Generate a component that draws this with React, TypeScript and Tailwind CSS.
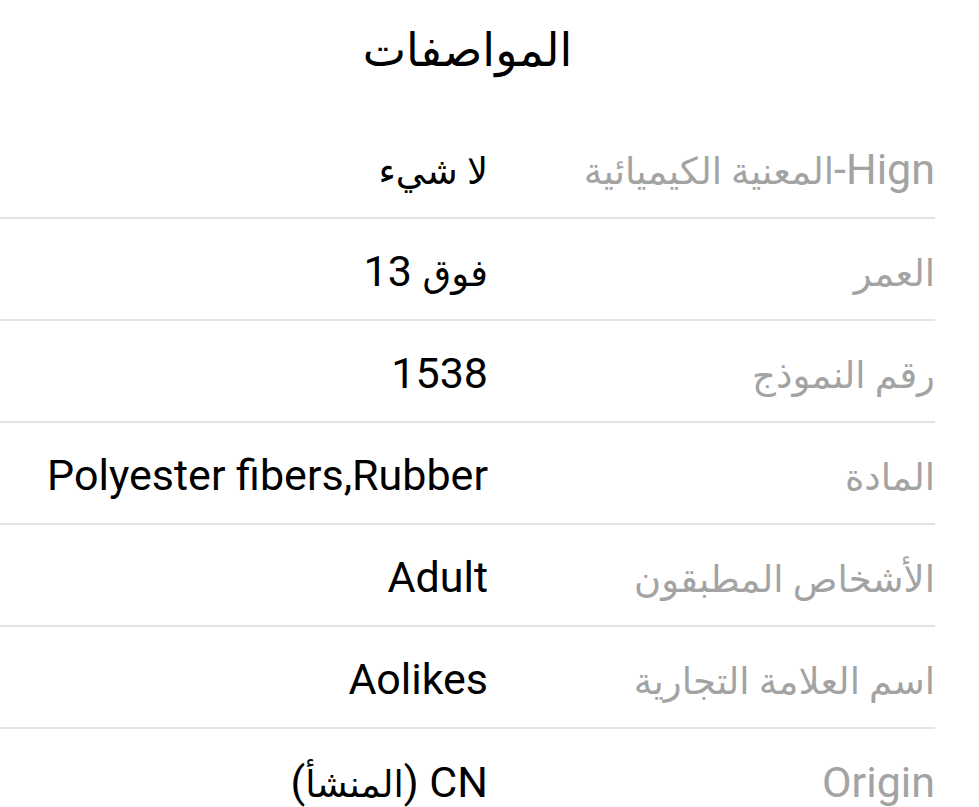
import React from "react";

const rows: [string, string][] = [
  ["Hign-المعنية الكيميائية", "لا شيء"],
  ["العمر", "فوق 13"],
  ["رقم النموذج", "1538"],
  ["المادة", "Polyester fibers,Rubber"],
  ["الأشخاص المطبقون", "Adult"],
  ["اسم العلامة التجارية", "Aolikes"],
  ["Origin", "CN (المنشأ)"],
];

function Mixed({ text }: { text: string }) {
  const parts = text.split(/([\u0600-\u06FF][\u0600-\u06FF\s]*[\u0600-\u06FF]|[\u0600-\u06FF])/g).filter((p) => p !== "");
  return (
    <>
      {parts.map((p, i) =>
        /[\u0600-\u06FF]/.test(p) ? (
          <span key={i} className="text-[37px]">
            {p}
          </span>
        ) : (
          <span key={i}>{p}</span>
        )
      )}
    </>
  );
}

export default function App() {
  return (
    <div
      dir="rtl"
      className="w-[979px] h-[807px] overflow-hidden bg-white"
      style={{ fontFamily: 'Roboto, "DejaVu Sans", "Noto Sans", sans-serif' }}
    >
      <div className="mr-[44px]">
        <div className="h-[117px] flex items-center justify-center pb-[16px] text-[46px] text-black">
          المواصفات
        </div>
        {rows.map(([label, value], i) => (
          <div
            key={i}
            className={`flex items-center h-[102px] ${i < rows.length - 1 ? "border-b-2 border-[#e3e3e3]" : ""}`}
          >
            <div className="w-[447px] shrink-0 text-[43px] leading-none text-[#a3a3a3] text-right pt-[4px]">
              <Mixed text={label} />
            </div>
            <div className="flex-1 text-[43px] leading-none text-black text-right pt-[4px]">
              <Mixed text={value} />
            </div>
          </div>
        ))}
      </div>
    </div>
  );
}
